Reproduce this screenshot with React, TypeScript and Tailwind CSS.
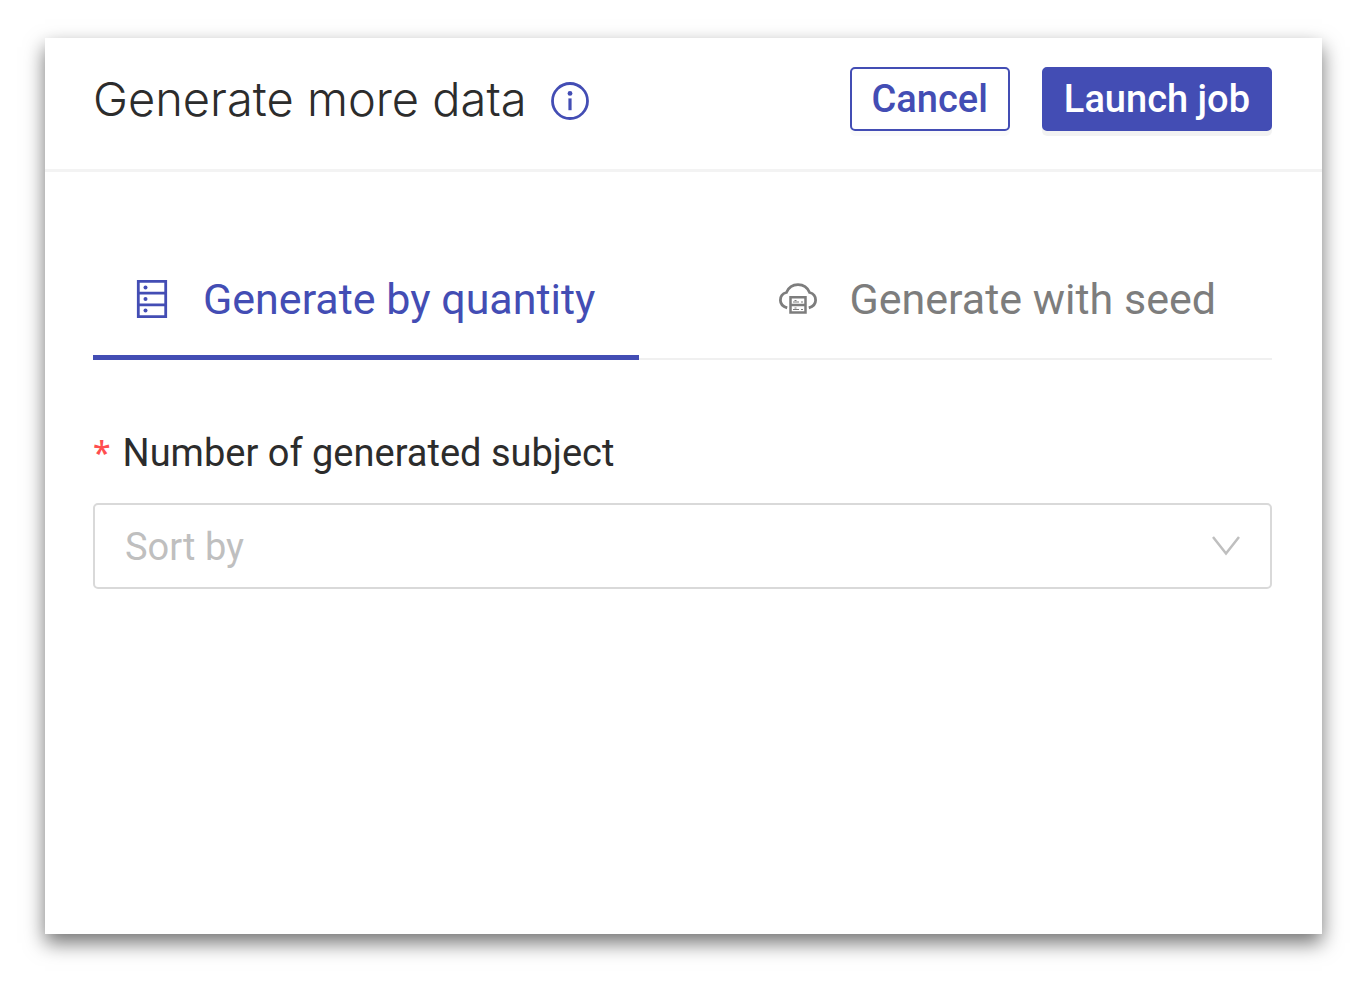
import { useState } from "react";
import type { ReactNode } from "react";

type Mode = "quantity" | "seed";

function InfoIcon() {
  return (
    <svg viewBox="0 0 38 38" className="size-[38px]" fill="none" stroke="currentColor" aria-hidden="true">
      <circle cx="19" cy="19" r="17.5" strokeWidth="2.8" />
      <circle cx="19" cy="11.4" r="2.4" fill="currentColor" stroke="none" />
      <path d="M19 16.4v11.8" strokeWidth="3.2" />
    </svg>
  );
}

function ServerIcon() {
  return (
    <svg viewBox="0 0 38 38" className="size-[38px]" fill="none" stroke="currentColor" strokeWidth="2.8" aria-hidden="true">
      <path d="M5.3 1.4h27.4v35.2H5.3zM5.3 13.2h27.4M5.3 24.8h27.4" />
      <g fill="currentColor" stroke="none">
        <circle cx="12.5" cy="7.5" r="2" />
        <circle cx="12.5" cy="19" r="2" />
        <circle cx="12.5" cy="30.5" r="2" />
      </g>
    </svg>
  );
}

function CloudServerIcon() {
  return (
    <svg viewBox="0 0 38 38" className="size-[38px]" fill="none" stroke="currentColor" strokeWidth="2.8" aria-hidden="true">
      <path d="M8.2 27.8C4 26.6 1.4 23.8 1.4 20.2c0-4 2.4-6.8 6-7.7C9.5 7.5 13.8 4.6 19 4.6s9.5 2.9 11.6 7.9c3.600.9 6 3.7 6 7.7 0 3.6-2.6 6.4-6.8 7.6" />
      <path d="M11.5 17.2h15v15.3h-15zM11.5 24.9h15" strokeWidth="2.5" />
      <path d="M14 22h6M14 29.5h6M22 22h2M22 29.5h2M15.5 20.5h2M15.5 28h2" strokeWidth="1.2" />
    </svg>
  );
}

function Tab({ icon, label, active, onClick }: { icon: ReactNode; label: string; active: boolean; onClick: () => void }) {
  return (
    <button
      type="button"
      role="tab"
      aria-selected={active}
      onClick={onClick}
      className={`-mb-[2px] flex items-center gap-8 border-b-[5px] pr-11 pb-7 pl-10 text-[43px] leading-[56px] whitespace-nowrap ${
        active ? "border-[#434db4] text-[#434db4]" : "border-transparent text-[#7d7d7d]"
      }`}
    >
      {icon}
      {label}
    </button>
  );
}

export default function App() {
  const [mode, setMode] = useState<Mode>("quantity");

  return (
    <div className="flex min-h-screen flex-col bg-white px-[45px] pt-[38px] pb-[58px] font-[Roboto,sans-serif] text-[#2c2c2c]">
      <main className="flex-1 bg-white shadow-[0_9px_19px_rgba(0,0,0,0.55)]">
        <header className="flex items-start justify-between border-b-[3px] border-[#f3f3f3] pt-[29px] pr-[50px] pb-[38px] pl-12">
          <div className="flex h-16 items-center gap-6">
            <h1 className="font-[Inter,sans-serif] text-[47px] leading-[56px] font-light whitespace-nowrap">Generate more data</h1>
            <button type="button" aria-label="More information" className="pt-1 text-[#434db4]">
              <InfoIcon />
            </button>
          </div>
          <div className="flex gap-8 text-[38px] leading-[60px] font-medium whitespace-nowrap">
            <button type="button" className="rounded-[5px] border-2 border-[#434db4] px-5 text-[#434db4] shadow-[0_5px_0_rgba(0,0,0,0.02)]">
              Cancel
            </button>
            <button type="button" className="rounded-[5px] border-2 border-[#434db4] bg-[#434db4] px-5 text-white shadow-[0_5px_0_rgba(0,0,0,0.05)]">
              Launch job
            </button>
          </div>
        </header>

        <section className="pt-[99px] pr-[50px] pl-12">
          <div role="tablist" className="flex gap-[100px] border-b-2 border-[#f0f0f0]">
            <Tab icon={<ServerIcon />} label="Generate by quantity" active={mode === "quantity"} onClick={() => setMode("quantity")} />
            <Tab icon={<CloudServerIcon />} label="Generate with seed" active={mode === "seed"} onClick={() => setMode("seed")} />
          </div>

          <form className="pt-[65px] text-[38px]">
            <label htmlFor="subjects" className="flex gap-3 leading-[56px]">
              <span className="font-[Noto_Sans,sans-serif] text-[32px] font-medium text-[#ff4d4f]">*</span>
              Number of generated subject
            </label>
            <div className="mt-[22px] grid items-center">
              <select
                id="subjects"
                defaultValue=""
                required
                className="col-start-1 row-start-1 h-[86px] w-full appearance-none rounded-[5px] border-2 border-[#d9d9d9] bg-white px-[30px] pt-[2px] text-[#bfbfbf]"
              >
                <option value="">Sort by</option>
              </select>
              <svg
                viewBox="0 0 28 20"
                className="pointer-events-none col-start-1 row-start-1 mr-8 h-5 w-7 justify-self-end"
                fill="none"
                stroke="#bfbfbf"
                strokeWidth="2.5"
                aria-hidden="true"
              >
                <path d="M1 1l13 16.5L27 1" />
              </svg>
            </div>
          </form>
        </section>
      </main>
    </div>
  );
}
